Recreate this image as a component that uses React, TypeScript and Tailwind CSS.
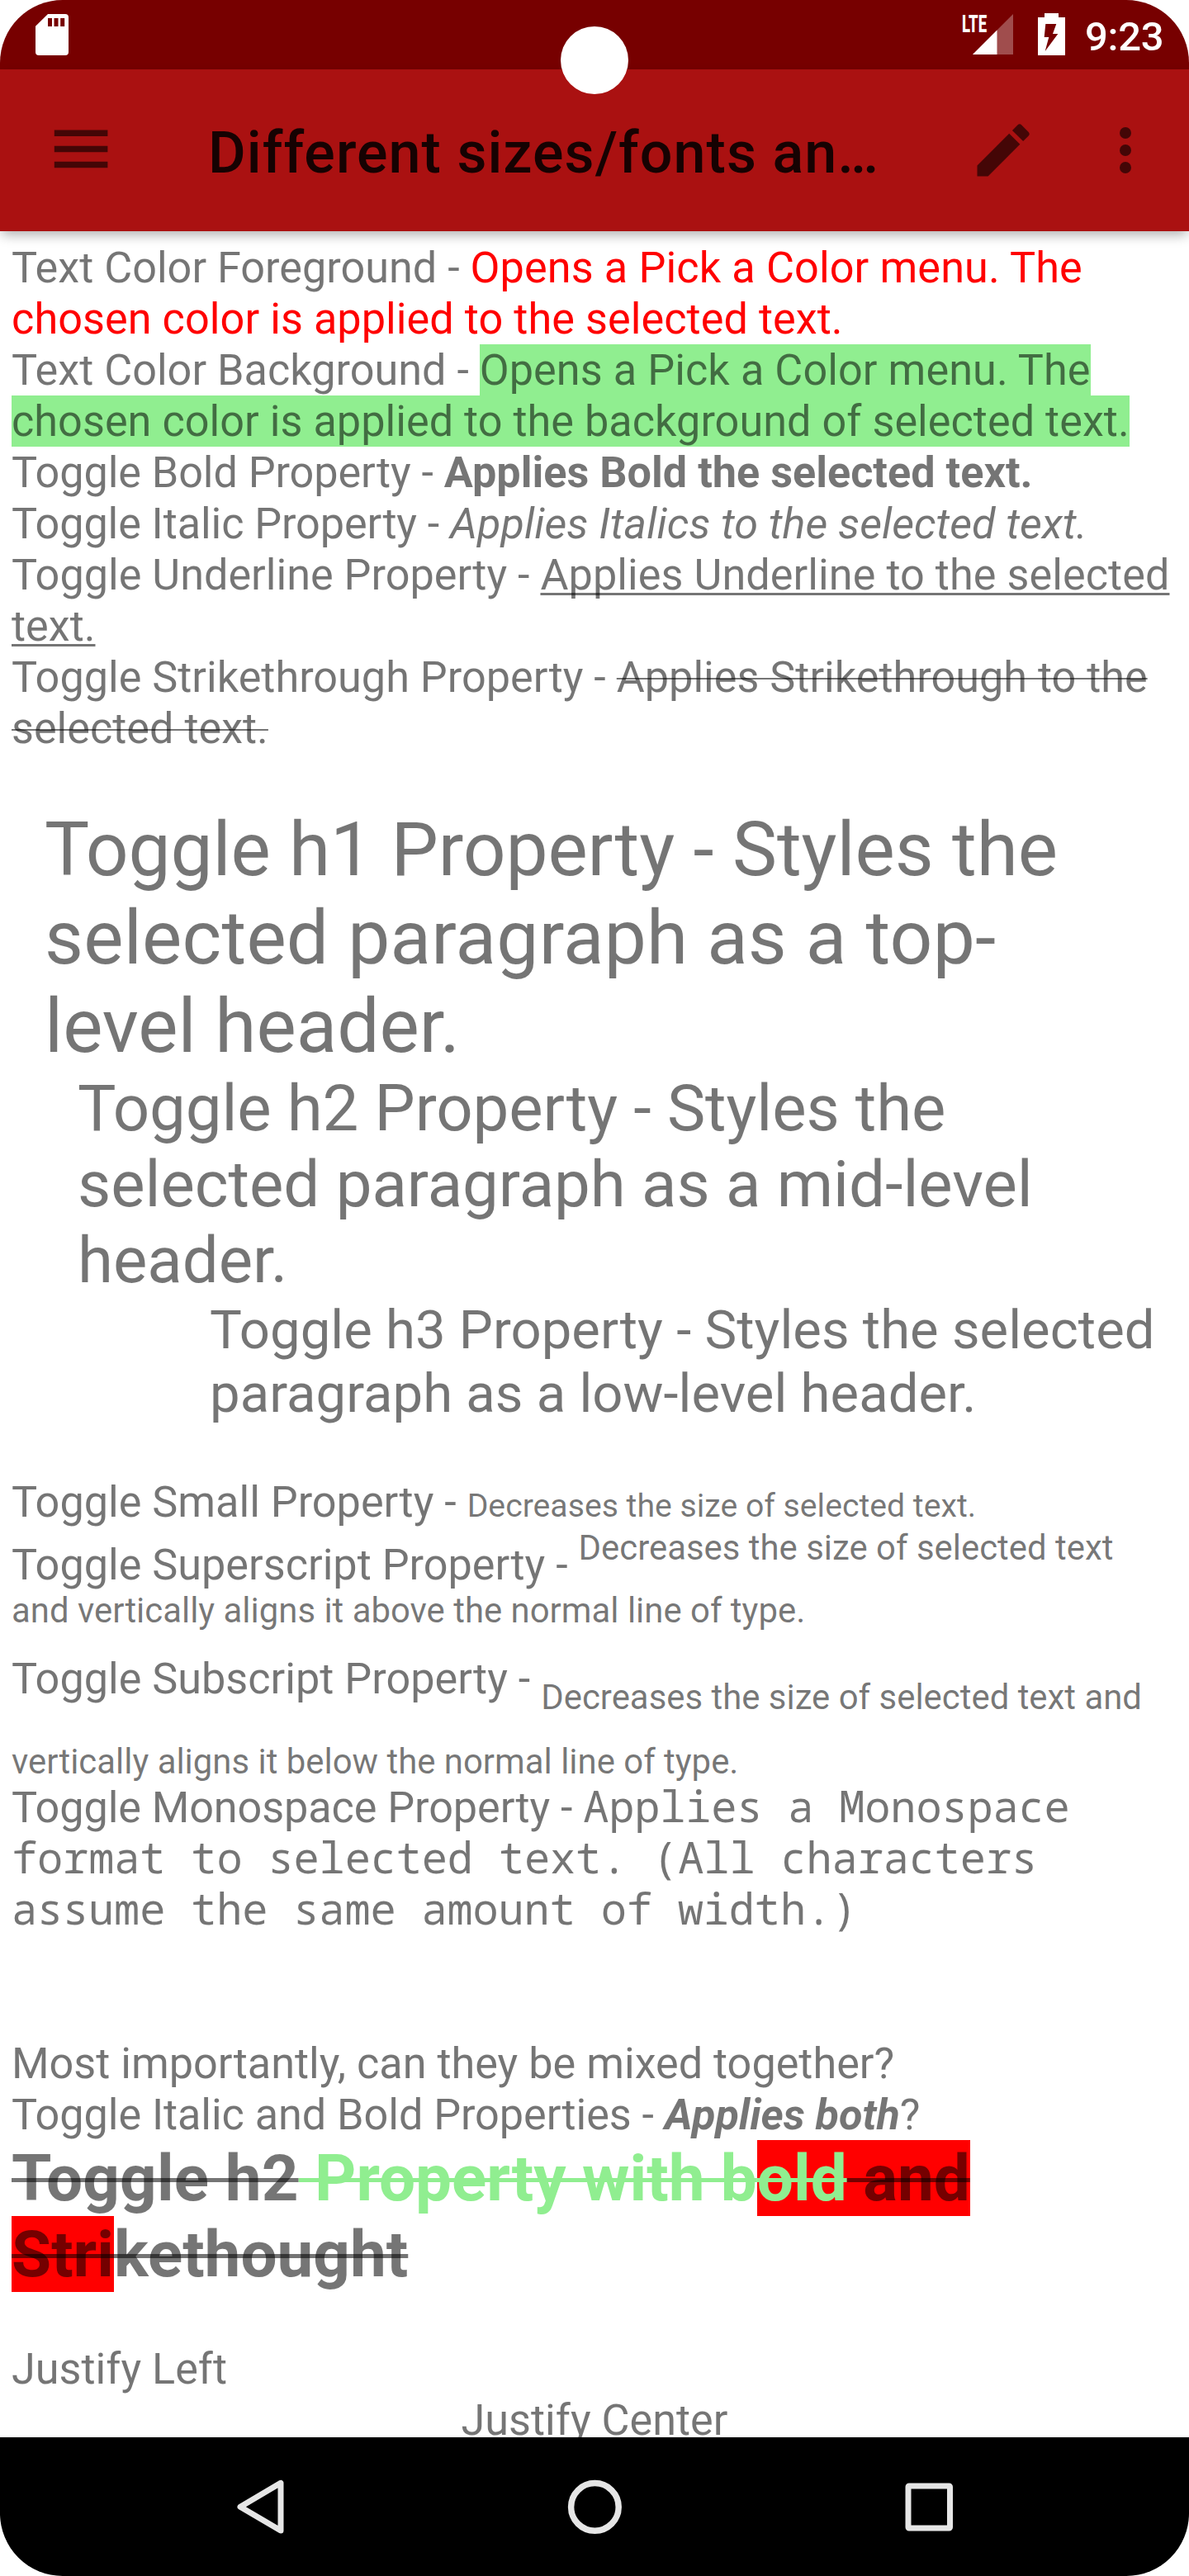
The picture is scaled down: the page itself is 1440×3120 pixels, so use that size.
import type { ReactNode } from 'react';

function Line({ children, className = '' }: { children?: ReactNode; className?: string }) {
  return <div className={`h-[62px] shrink-0 text-[52.2px] leading-[63px] whitespace-pre ${className}`}>{children}</div>;
}

function Mono({ children, className = '' }: { children?: ReactNode; className?: string }) {
  return <span className={`font-['Noto_Sans_Mono','DejaVu_Sans_Mono',monospace] text-[52px] leading-[0] ${className}`}>{children}</span>;
}

function StatusBar() {
  return (
    <div className="flex h-[84px] shrink-0 items-start justify-between bg-[#770000] pl-[43px] pr-[31px] text-white">
      <svg className="mt-[17px] h-[50px] w-[40px]" viewBox="0 0 40 50" fill="none">
        <path d="M15 0H36a4 4 0 0 1 4 4V46a4 4 0 0 1-4 4H4a4 4 0 0 1-4-4V14.700Z" fill="#fff" />
        <path d="M15 5h5v10h-5zM22.500 5h5v10h-5zM30.200 5h5v10h-5z" fill="#770000" />
      </svg>
      <div className="flex items-start">
        <span className="mt-[14px] mr-[-18px] h-[30px] w-[50px] origin-top-left scale-x-[0.63] text-[29.500px] leading-[30px] font-extrabold">LTE</span>
        <svg className="mt-[17px] ml-[-19px] h-[49px] w-[49px]" viewBox="0 0 49 49">
          <path d="M0 49 49 0V49Z" fill="#fff" fillOpacity=".3" />
          <path d="M0 49 29.500 19.500V49Z" fill="#fff" />
        </svg>
        <svg className="mt-[16px] ml-[30px] h-[51px] w-[33px]" viewBox="0 0 33 51">
          <path d="M8 0H25V5H33V51H0V5H8Z" fill="#fff" />
          <path d="M9.300 13H22.300L18 25H24.300L8.700 46L13.300 29H7.700Z" fill="#770000" />
        </svg>
        <span className="mt-[16px] ml-[24px] w-[95px] text-[49px] leading-[58px] font-medium tracking-[-0.300px] whitespace-nowrap">9:23</span>
      </div>
    </div>
  );
}

function Toolbar() {
  return (
    <div className="z-10 flex h-[196px] shrink-0 items-center bg-[#aa1111] text-black/60 shadow-[0_6px_14px_-2px_rgba(0,0,0,0.33)]">
      <svg className="ml-[56px] h-[84px] w-[84px]" viewBox="0 0 84 84" fill="currentColor">
        <path d="M9.800 17.500H74.400V25H9.800zM9.800 36.700H74.400V44.200H9.800zM9.800 55.700H74.400V63.200H9.800z" />
      </svg>
      <h1 className="mt-[6px] ml-[112px] w-[820px] text-[70px] leading-[84px] font-medium tracking-[1.050px] whitespace-nowrap text-black/87">
        Different sizes/fonts an…
      </h1>
      <svg className="ml-[101px] h-[84px] w-[84px]" viewBox="0 0 24 24" fill="currentColor">
        <path d="M3 17.250V21h3.750L17.810 9.940l-3.750-3.750L3 17.250zM20.710 7.040a1 1 0 0 0 0-1.410l-2.340-2.340a1 1 0 0 0-1.410 0l-1.830 1.830 3.750 3.750 1.830-1.830z" />
      </svg>
      <svg className="ml-[64px] h-[84px] w-[84px]" viewBox="0 0 24 24" fill="currentColor">
        <circle cx="12" cy="6" r="2" />
        <circle cx="12" cy="12" r="2" />
        <circle cx="12" cy="18" r="2" />
      </svg>
    </div>
  );
}

function Note() {
  return (
    <div className="flex min-h-0 flex-1 flex-col overflow-hidden bg-white px-[14px] pt-[13px] text-black/54">
      <Line>Text Color Foreground - <span className="tracking-[0.120px] text-[#ff0000]">Opens a Pick a Color menu. The</span></Line>
      <Line className="tracking-[0.060px] text-[#ff0000]">chosen color is applied to the selected text.</Line>
      <Line className="flex">Text Color Background - <span className="h-[62px] bg-[#90ee90] tracking-[0.070px]">Opens a Pick a Color menu. The</span></Line>
      <Line className="flex"><span className="h-[62px] bg-[#90ee90] tracking-[0.030px]">chosen color is applied to the background of selected text.</span></Line>
      <Line className="tracking-[-0.080px]">Toggle Bold Property - <b className="font-bold tracking-normal">Applies Bold the selected text.</b></Line>
      <Line className="tracking-[-0.100px]">Toggle Italic Property - <i className="tracking-normal">Applies Italics to the selected text.</i></Line>
      <Line>
        Toggle Underline Property - <span className="underline decoration-[3px] underline-offset-[4px] tracking-[0.060px] [text-decoration-skip-ink:none]">Applies Underline to the selected</span>
      </Line>
      <Line><span className="underline decoration-[3px] underline-offset-[4px] [text-decoration-skip-ink:none]">text.</span></Line>
      <Line>Toggle Strikethrough Property - <span className="line-through decoration-[2px]">Applies Strikethrough to the</span></Line>
      <Line><span className="line-through decoration-[2px]">selected text.</span></Line>
      <Line />

      <div className="h-[321px] shrink-0 pt-[1px] pl-[40px] text-[91px] leading-[107px] whitespace-pre">
        <div className="tracking-[-0.120px]">Toggle h1 Property - Styles the</div>
        <div className="tracking-[0.230px]">selected paragraph as a top-</div>
        <div>level header.</div>
      </div>
      <div className="h-[276px] shrink-0 pt-[1px] pl-[80px] text-[78px] leading-[92px] whitespace-pre">
        <div className="tracking-[-0.110px]">Toggle h2 Property - Styles the</div>
        <div className="tracking-[-0.040px]">selected paragraph as a mid-level</div>
        <div>header.</div>
      </div>
      <div className="h-[154px] shrink-0 pt-[1px] pl-[240px] text-[65.200px] leading-[77px] tracking-[0.040px] whitespace-pre">
        <div>Toggle h3 Property - Styles the selected</div>
        <div>paragraph as a low-level header.</div>
      </div>
      <Line />

      <Line>Toggle Small Property - <small className="text-[39.200px]">Decreases the size of selected text.</small></Line>
      <div className="h-[74px] shrink-0 pt-[15px] text-[52.200px] leading-[62px] whitespace-pre">
        Toggle Superscript Property - <span className="align-[24px] text-[41.900px] leading-[0]">Decreases the size of selected text</span>
      </div>
      <div className="h-[52px] shrink-0 pt-[1px] text-[41.900px] leading-[52px] whitespace-pre">and vertically aligns it above the normal line of type.</div>
      <div className="h-[131px] shrink-0 pt-[27px] text-[52.200px] leading-[62px] whitespace-pre">
        Toggle Subscript Property - <span className="align-[-19px] text-[41.900px] leading-[0]">Decreases the size of selected text and</span>
      </div>
      <div className="h-[51px] shrink-0 pt-[1px] text-[41.900px] leading-[51px] whitespace-pre">vertically aligns it below the normal line of type.</div>
      <Line className="tracking-[-0.090px]">
        Toggle Monospace Property - <Mono className="tracking-[-0.180px]">Applies a Monospace</Mono>
      </Line>
      <Line><Mono className="tracking-[-0.150px]">format to selected text. (All characters</Mono></Line>
      <Line><Mono className="tracking-[-0.170px]">assume the same amount of width.)</Mono></Line>
      <Line />
      <Line />

      <Line>Most importantly, can they be mixed together?</Line>
      <Line className="tracking-[-0.060px]">Toggle Italic and Bold Properties - <b className="font-bold italic">Applies both</b>?</Line>
      <div className="flex h-[92px] shrink-0 text-[78.200px] leading-[92px] font-bold whitespace-pre">
        <span className="line-through decoration-[5px] tracking-[0.150px]">Toggle h2</span>
        <span className="text-[#90ee90] line-through decoration-[5px]"> Property with b</span>
        <span className="bg-[#ff0000] text-[#90ee90] line-through decoration-[5px]">old</span>
        <span className="bg-[#ff0000] line-through decoration-[5px]"> and</span>
      </div>
      <div className="flex h-[92px] shrink-0 text-[78.200px] leading-[92px] font-bold whitespace-pre">
        <span className="bg-[#ff0000] line-through decoration-[5px]">Stri</span>
        <span className="line-through decoration-[5px]">kethought</span>
      </div>
      <Line />
      <Line>Justify Left</Line>
      <Line className="text-center">Justify Center</Line>
    </div>
  );
}

function NavBar() {
  return (
    <div className="flex h-[168px] shrink-0 items-center justify-between bg-black px-[273px] text-[#e6e6e6]">
      <svg className="h-[84px] w-[84px]" viewBox="0 0 84 84" fill="none" stroke="currentColor" strokeWidth="7" strokeLinejoin="round">
        <path d="M67 13.300V71L18 42.200Z" />
      </svg>
      <svg className="h-[84px] w-[84px]" viewBox="0 0 84 84" fill="none" stroke="currentColor" strokeWidth="7.500">
        <circle cx="42.400" cy="42.400" r="28.800" />
      </svg>
      <svg className="h-[84px] w-[84px]" viewBox="0 0 84 84" fill="none" stroke="currentColor" strokeWidth="7" strokeLinejoin="round">
        <rect x="17" y="17" width="50.500" height="51" rx="1" />
      </svg>
    </div>
  );
}

export default function App() {
  return (
    <div className="h-[3120px] w-[1440px] bg-white">
      <div className="relative flex h-full flex-col overflow-hidden rounded-[76px] font-[Roboto,sans-serif]">
        <StatusBar />
        <Toolbar />
        <Note />
        <NavBar />
        <div className="absolute top-[32px] left-[679px] z-20 h-[82px] w-[82px] rounded-full bg-white" />
      </div>
    </div>
  );
}
